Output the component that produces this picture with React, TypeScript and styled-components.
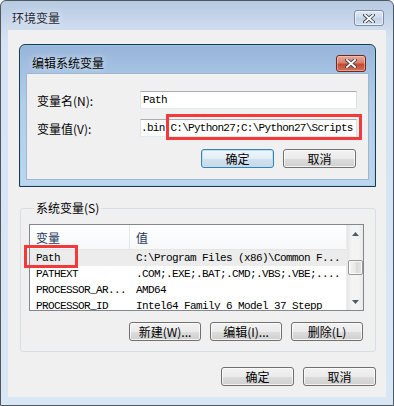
import React from "react";
import styled, { createGlobalStyle, css } from "styled-components";

const Global = createGlobalStyle`
  html, body { margin: 0; padding: 0; width: 394px; height: 406px; overflow: hidden; background: #fff; }
  body { font-family: "Noto Sans CJK SC", "Liberation Sans", sans-serif; font-size: 12px; }
  * { box-sizing: border-box; }
`;

const cjk = `"Noto Sans CJK SC", "Liberation Sans", sans-serif`;
const mono = `"Liberation Mono", "Noto Sans CJK SC", monospace`;

const Window = styled.div`
  position: relative;
  width: 394px;
  height: 406px;
  border: 1px solid #4f5761;
  border-radius: 6px 6px 0 0;
  background: linear-gradient(to bottom, #b6cae3 0px, #cddbed 26px, #d6e3f2 40px, #d9e6f4 100%);
  display: flex;
  flex-direction: column;
`;

const TitleBar = styled.div`
  height: 29px;
  padding: 5px 9px 0 11px;
  display: flex;
  align-items: center;
  justify-content: space-between;
`;

const TitleText = styled.span<{ $dark?: boolean }>`
  font-family: ${cjk};
  font-size: 12px;
  line-height: 16px;
  color: ${(p) => (p.$dark ? "#000" : "#1f2a36")};
  text-shadow: 0 0 6px rgba(255, 255, 255, 0.9);
`;

const CloseBtn = styled.div<{ $red?: boolean }>`
  width: 30px;
  height: 16px;
  border: 1px solid #7d8ea4;
  border-radius: 3px;
  background: linear-gradient(to bottom, rgba(255,255,255,0.55), rgba(210,222,238,0.5) 50%, rgba(190,206,226,0.5) 51%, rgba(215,228,243,0.6));
  box-shadow: inset 0 0 0 1px rgba(255, 255, 255, 0.5);
  display: flex;
  align-items: center;
  justify-content: center;
  ${(p) =>
    p.$red &&
    css`
      height: 17px;
      border-color: #6f2a1f;
      background: linear-gradient(to bottom, #e9a898 0%, #d9806c 45%, #c5492f 55%, #d2705a 100%);
      box-shadow: inset 0 0 0 1px rgba(255, 210, 200, 0.5);
    `}
`;

const Client = styled.div`
  flex: 1;
  margin: 0 7px 8px;
  background: #f0f0f0;
  padding: 14px 10px 11px 11px;
  display: flex;
  flex-direction: column;
`;

const Dialog = styled.div`
  width: 357px;
  height: 143px;
  border: 1px solid #24384c;
  border-radius: 6px 6px 0 0;
  background: linear-gradient(to bottom, #97b5da 0px, #a6c2e3 28px, #b3cdea 60px, #bdd5ee 100%);
  box-shadow: inset 0 0 0 1px rgba(130, 215, 235, 0.55);
  display: flex;
  flex-direction: column;
`;

const DialogTitle = styled.div`
  height: 28px;
  padding: 8px 9px 0 12px;
  display: flex;
  align-items: center;
  justify-content: space-between;
`;

const DialogBody = styled.div`
  flex: 1;
  margin: 0 6px 6px;
  background: #f0f0f0;
  border: 1px solid #9fb6cf;
  padding: 17px 11px 0 10px;
  display: flex;
  flex-direction: column;
`;

const FieldRow = styled.div<{ $gap?: number }>`
  display: flex;
  align-items: center;
  margin-top: ${(p) => p.$gap ?? 0}px;
`;

const Label = styled.span`
  width: 103px;
  font-family: ${cjk};
  font-size: 12px;
  color: #000;
`;

const Input = styled.div<{ $tight?: boolean }>`
  width: 217px;
  height: 18px;
  background: #fff;
  border: 1px solid;
  border-color: #abadb3 #dbdfe6 #e3e9ef #e2e3ea;
  padding: 0 ${(p) => (p.$tight ? 0 : 2)}px;
  display: flex;
  align-items: center;
  overflow: hidden;
  white-space: nowrap;
  font-family: ${mono};
  font-size: 11px;
  letter-spacing: ${(p) => (p.$tight ? -0.72 : -0.6)}px;
  color: #000;
`;

const ButtonRow = styled.div<{ $top: number; $right: number }>`
  display: flex;
  justify-content: flex-end;
  gap: 9px;
  margin-top: ${(p) => p.$top}px;
  padding-right: ${(p) => p.$right}px;
`;

const Btn = styled.button<{ $primary?: boolean; $w?: number }>`
  width: ${(p) => p.$w ?? 73}px;
  height: 19px;
  padding: 0;
  border: 1px solid #707070;
  border-radius: 3px;
  background: linear-gradient(to bottom, #f2f2f2 0%, #ebebeb 50%, #dddddd 51%, #cfcfcf 100%);
  box-shadow: inset 0 0 0 1px rgba(255, 255, 255, 0.75);
  font-family: ${cjk};
  font-size: 12px;
  line-height: 15px;
  color: #000;
  display: flex;
  align-items: center;
  justify-content: center;
  ${(p) =>
    p.$primary &&
    css`
      border-color: #3c7fb1;
      background: linear-gradient(to bottom, #eef6fb 0%, #e2eef6 50%, #d2e3ee 51%, #c6d9e6 100%);
      box-shadow: inset 0 0 0 1px #b9e2f6;
    `}
`;

const Group = styled.fieldset`
  margin: 13px 0 0 1px;
  padding: 8px 11px 10px 8px;
  border: 1px solid #d5dfe5;
  border-radius: 3px;
  min-width: 0;
  display: flex;
  flex-direction: column;
`;

const Legend = styled.legend`
  margin-left: 5px;
  padding: 0 2px;
  font-family: ${cjk};
  font-size: 12px;
  line-height: 16px;
  color: #000;
`;

const ListView = styled.div`
  height: 87px;
  border: 1px solid #828790;
  background: #fff;
  display: flex;
  overflow: hidden;
`;

const ListBody = styled.div`
  flex: 1;
  display: flex;
  flex-direction: column;
  overflow: hidden;
`;

const HeaderRow = styled.div`
  height: 25px;
  flex: none;
  display: flex;
  background: linear-gradient(to bottom, #ffffff, #f7f8fa);
  border-bottom: 1px solid #e5e5e5;
`;

const HeaderCell = styled.div<{ $w?: number }>`
  width: ${(p) => (p.$w ? `${p.$w}px` : "auto")};
  flex: ${(p) => (p.$w ? "none" : 1)};
  padding-left: 6px;
  display: flex;
  align-items: center;
  font-family: ${cjk};
  font-size: 12px;
  color: #1e395b;
  border-right: ${(p) => (p.$w ? "1px solid #e5e5e5" : "none")};
`;

const Row = styled.div<{ $sel?: boolean }>`
  height: 16px;
  flex: none;
  display: flex;
  align-items: center;
  background: ${(p) => (p.$sel ? "#ececec" : "transparent")};
`;

const Cell = styled.div<{ $w?: number }>`
  width: ${(p) => (p.$w ? `${p.$w}px` : "auto")};
  flex: ${(p) => (p.$w ? "none" : 1)};
  padding-left: 6px;
  white-space: nowrap;
  overflow: hidden;
  font-family: ${mono};
  font-size: 11px;
  letter-spacing: -0.6px;
  color: #000;
`;

const ScrollBar = styled.div`
  width: 17px;
  flex: none;
  display: flex;
  flex-direction: column;
  background: linear-gradient(to right, #e6e6e6, #f4f4f4 30%, #f4f4f4 70%, #e9e9e9);
  border-left: 1px solid #ececec;
`;

const Arrow = styled.div`
  height: 17px;
  flex: none;
  display: flex;
  align-items: center;
  justify-content: center;
`;

const Track = styled.div`
  flex: 1;
  padding-top: 18px;
  display: flex;
  justify-content: center;
`;

const Thumb = styled.div`
  width: 15px;
  height: 15px;
  border: 1px solid #979797;
  border-radius: 2px;
  background: linear-gradient(to right, #f5f5f5, #e6e6e6 50%, #d9d9d9 51%, #e3e3e3);
  box-shadow: inset 0 0 0 1px rgba(255, 255, 255, 0.8);
`;

const Highlight = styled.div`
  position: absolute;
  border: 3px solid #f23a3a;
  pointer-events: none;
`;

const XIcon = ({ size = 12 }: { size?: number }) => (
  <svg width={size} height={size * 0.75} viewBox="0 0 12 9">
    <path d="M2 1 L10 8 M10 1 L2 8" stroke="#3c4650" strokeWidth="3.6" strokeLinecap="square" />
    <path d="M2 1 L10 8 M10 1 L2 8" stroke="#fff" strokeWidth="1.8" strokeLinecap="square" />
  </svg>
);

const Tri = ({ up }: { up?: boolean }) => (
  <svg width="7" height="4" viewBox="0 0 7 4">
    <polygon points={up ? "0,4 7,4 3.5,0" : "0,0 7,0 3.5,4"} fill="#4d5a66" />
  </svg>
);

const rows = [
  { name: "Path", value: "C:\\Program Files (x86)\\Common F...", sel: true },
  { name: "PATHEXT", value: ".COM;.EXE;.BAT;.CMD;.VBS;.VBE;...." },
  { name: "PROCESSOR_AR...", value: "AMD64" },
  { name: "PROCESSOR_ID", value: "Intel64 Family 6 Model 37 Stepp" },
];

export default function App() {
  return (
    <>
      <Global />
      <Window>
        <TitleBar>
          <TitleText>环境变量</TitleText>
          <CloseBtn>
            <XIcon />
          </CloseBtn>
        </TitleBar>
        <Client>
          <Dialog>
            <DialogTitle>
              <TitleText $dark>编辑系统变量</TitleText>
              <CloseBtn $red>
                <XIcon />
              </CloseBtn>
            </DialogTitle>
            <DialogBody>
              <FieldRow>
                <Label>变量名(N):</Label>
                <Input>Path</Input>
              </FieldRow>
              <FieldRow $gap={10}>
                <Label>变量值(V):</Label>
                <Input $tight>.bin;C:\Python27;C:\Python27\Scripts</Input>
              </FieldRow>
              <ButtonRow $top={12} $right={1}>
                <Btn $primary>确定</Btn>
                <Btn>取消</Btn>
              </ButtonRow>
            </DialogBody>
          </Dialog>
          <Group>
            <Legend>系统变量(S)</Legend>
            <ListView>
              <ListBody>
                <HeaderRow>
                  <HeaderCell $w={100}>变量</HeaderCell>
                  <HeaderCell>值</HeaderCell>
                </HeaderRow>
                {rows.map((r) => (
                  <Row key={r.name} $sel={r.sel}>
                    <Cell $w={100}>{r.name}</Cell>
                    <Cell>{r.value}</Cell>
                  </Row>
                ))}
              </ListBody>
              <ScrollBar>
                <Arrow>
                  <Tri up />
                </Arrow>
                <Track>
                  <Thumb />
                </Track>
                <Arrow>
                  <Tri />
                </Arrow>
              </ScrollBar>
            </ListView>
            <ButtonRow $top={11} $right={1}>
              <Btn $w={72}>新建(W)...</Btn>
              <Btn $w={72}>编辑(I)...</Btn>
              <Btn $w={72}>删除(L)</Btn>
            </ButtonRow>
          </Group>
          <ButtonRow $top={15} $right={0}>
            <Btn>确定</Btn>
            <Btn>取消</Btn>
          </ButtonRow>
        </Client>
        <Highlight style={{ left: 165, top: 113, width: 196, height: 26 }} />
        <Highlight style={{ left: 23, top: 244, width: 54, height: 23 }} />
      </Window>
    </>
  );
}
